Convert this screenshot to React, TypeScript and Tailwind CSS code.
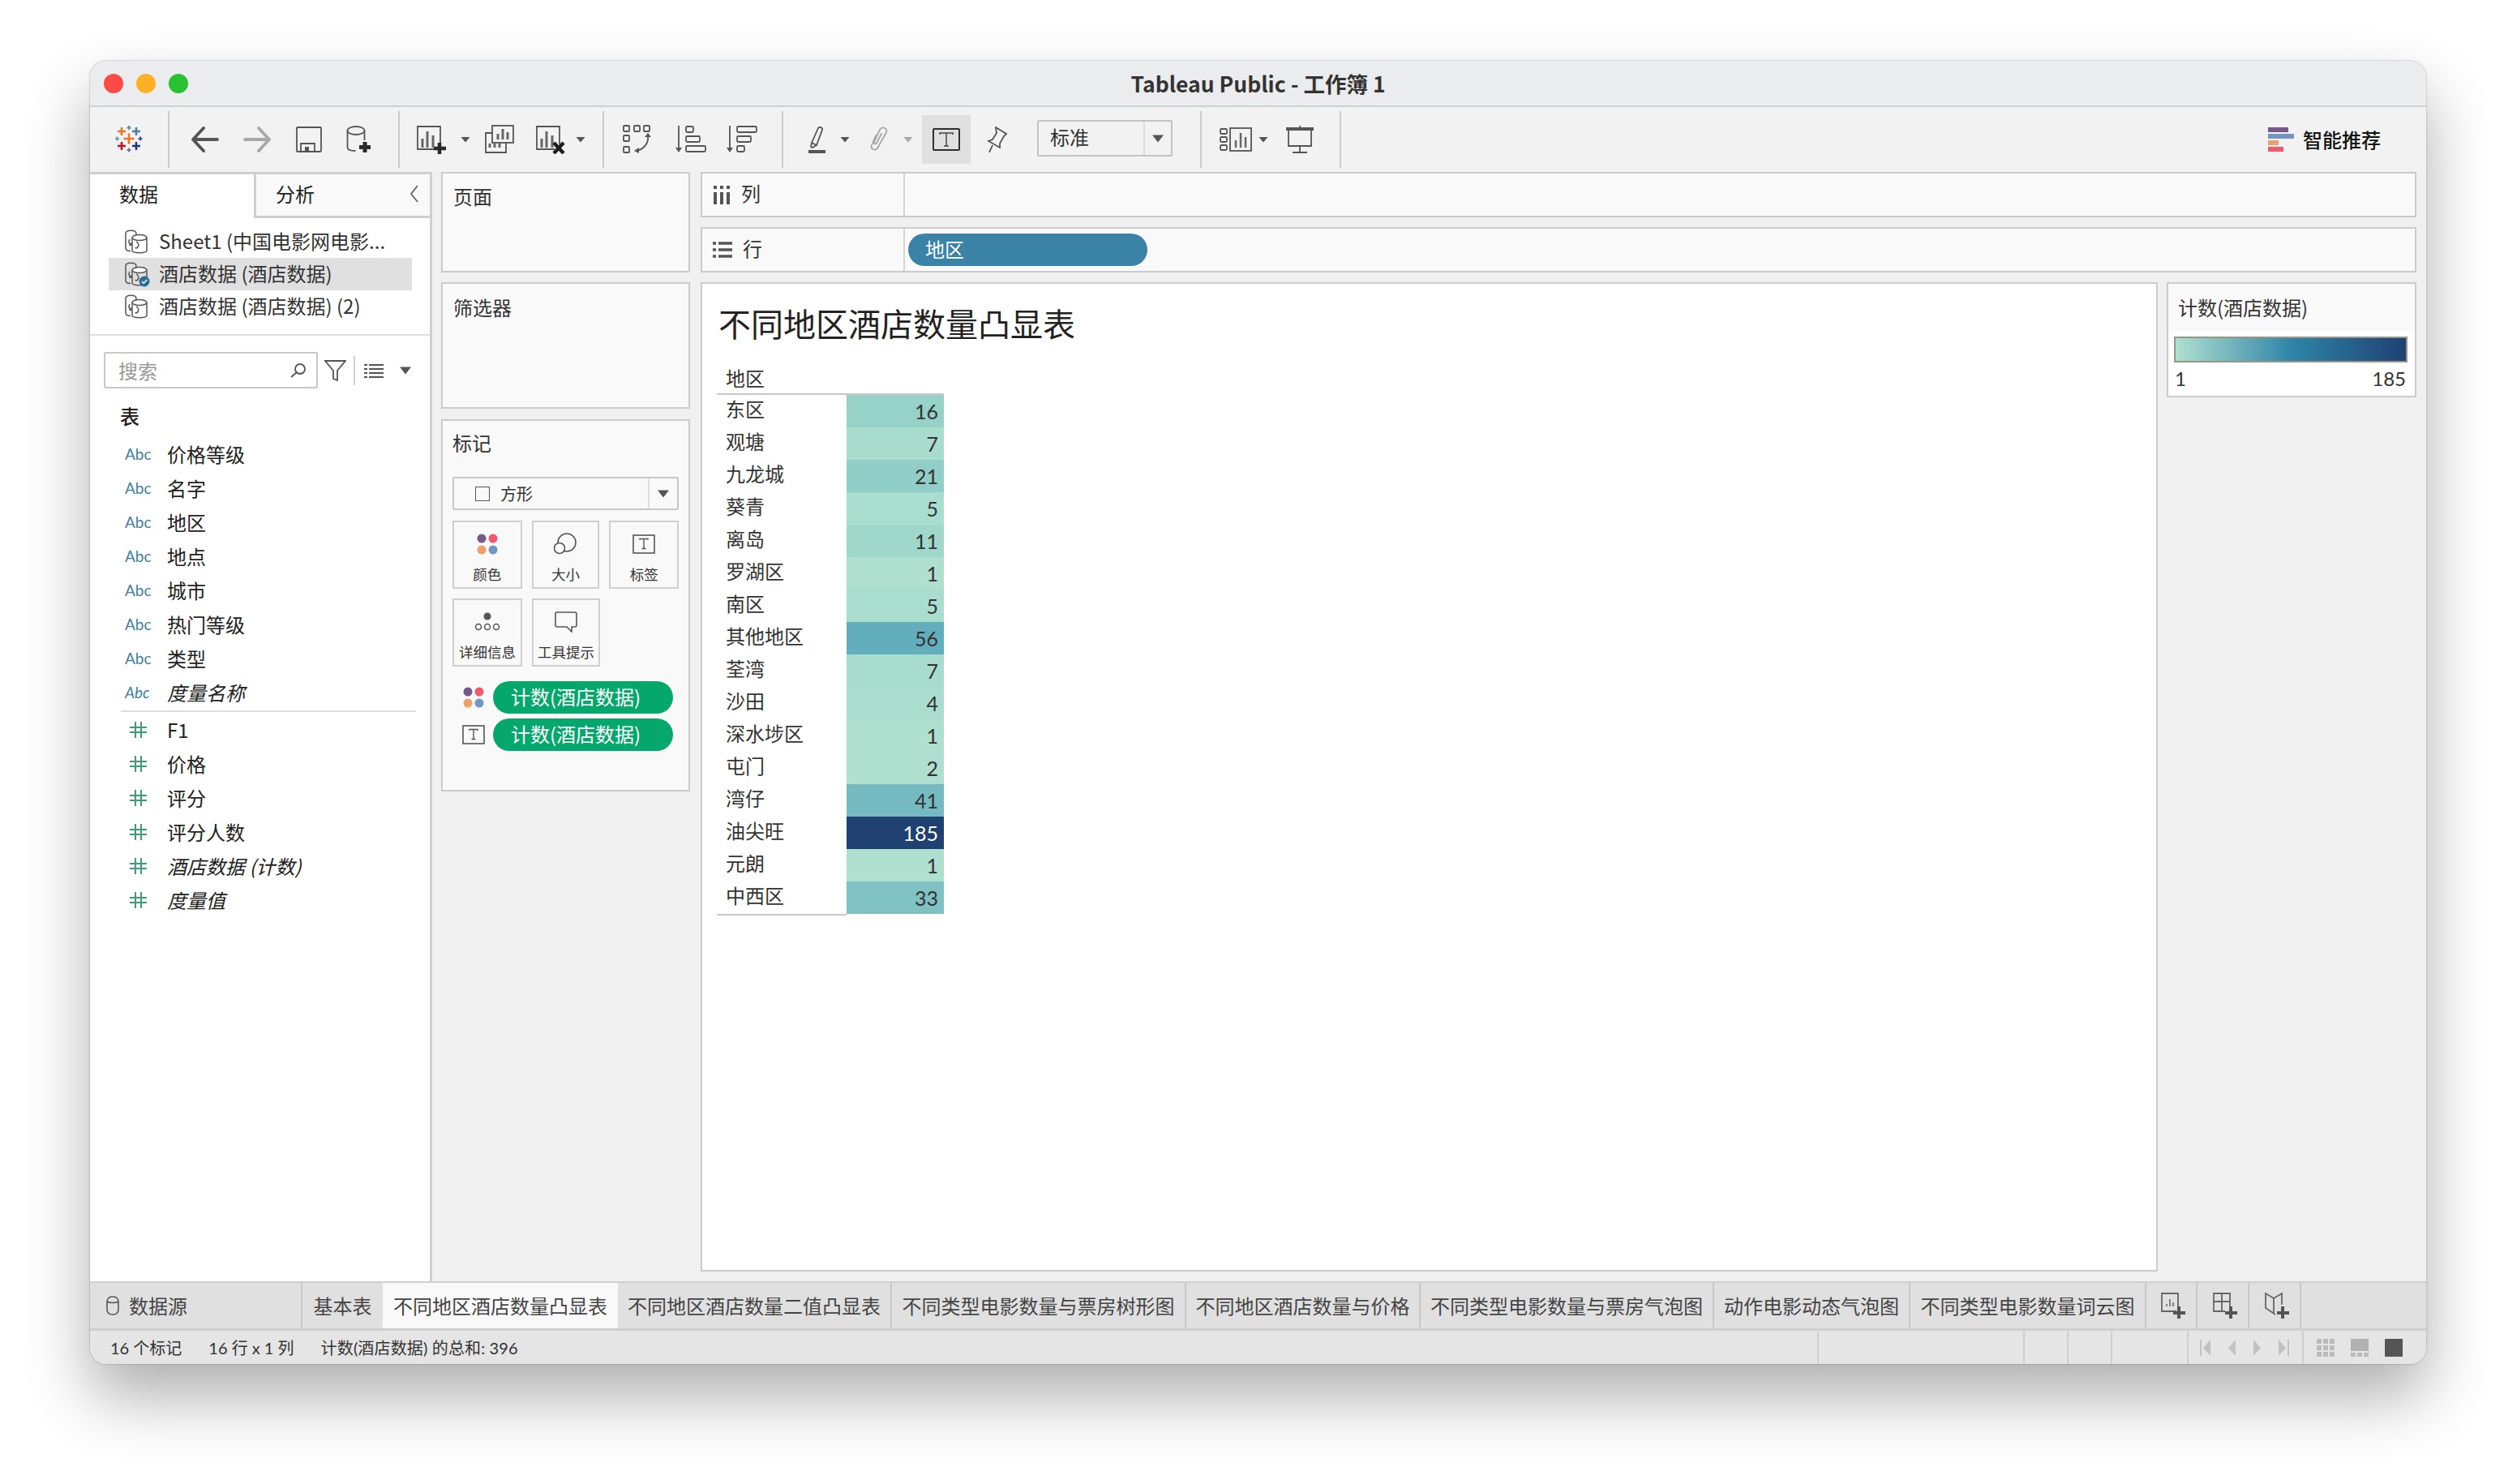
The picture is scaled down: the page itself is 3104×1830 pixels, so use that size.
import type { ReactNode } from 'react';

const TABLE_ROWS: [string, number, string][] = [
  ['东区', 16, '#97d2c9'],
  ['观塘', 7, '#a8dccd'],
  ['九龙城', 21, '#92cec8'],
  ['葵青', 5, '#a9ddce'],
  ['离岛', 11, '#9fd7cb'],
  ['罗湖区', 1, '#afe0cf'],
  ['南区', 5, '#a9ddce'],
  ['其他地区', 56, '#63aebd'],
  ['荃湾', 7, '#a8dccd'],
  ['沙田', 4, '#aaddce'],
  ['深水埗区', 1, '#afe0cf'],
  ['屯门', 2, '#aedfcf'],
  ['湾仔', 41, '#74bac0'],
  ['油尖旺', 185, '#1f4172'],
  ['元朗', 1, '#afe0cf'],
  ['中西区', 33, '#80c2c4'],
];

const DIM_FIELDS = ['价格等级', '名字', '地区', '地点', '城市', '热门等级', '类型'];
const MEASURE_FIELDS = ['F1', '价格', '评分', '评分人数'];

const TABS: [string, string][] = [
  ['不同地区酒店数量二值凸显表', 'w-[338px]'],
  ['不同类型电影数量与票房树形图', 'w-[363px]'],
  ['不同地区酒店数量与价格', 'w-[289px]'],
  ['不同类型电影数量与票房气泡图', 'w-[362px]'],
  ['动作电影动态气泡图', 'w-[242px]'],
  ['不同类型电影数量词云图', 'w-[291px]'],
];

function Caret({ className = '', color = '#555', big = false }: { className?: string; color?: string; big?: boolean }) {
  return (
    <svg width="16" height="10" viewBox="0 0 16 10" className={className}>
      <path d={big ? 'M1 0.500h14L8 9.500z' : 'M2.500 2h11L8 8.500z'} fill={color} />
    </svg>
  );
}

function Sep({ className = '' }: { className?: string }) {
  return <div className={`h-[70px] w-[2px] shrink-0 self-center bg-[#cbcbcb] ${className}`} />;
}

function TableauLogo() {
  const plus = (x: number, y: number, r: number, c: string, w = 2.6) => (
    <path d={`M${x - r} ${y}H${x + r}M${x} ${y - r}V${y + r}`} stroke={c} strokeWidth={w} fill="none" />
  );
  return (
    <svg width="34" height="34" viewBox="0 0 34 34">
      {plus(17, 16, 6.5, '#e8762b', 2.6)}
      {plus(8, 7, 5, '#e8762b')}
      {plus(26, 7, 5, '#4e7f9a')}
      {plus(8, 25, 5, '#c0142f')}
      {plus(26, 25, 5, '#1e3a78')}
      {plus(17, 2.5, 2.5, '#5e8fa6', 2)}
      {plus(17, 30, 2.5, '#6e7ba6', 2)}
      {plus(2.5, 16, 2.5, '#6e9fa8', 2)}
      {plus(31, 16, 2.5, '#45558f', 2)}
    </svg>
  );
}

function DbIcon({ check = false }: { check?: boolean }) {
  return (
    <svg width="34" height="32" viewBox="0 0 34 32" fill="none" stroke="#555" strokeWidth="1.5">
      <path d="M3 6c0-5 13-5 13 0v2" />
      <path d="M3 6v18c0 2.5 3 3.5 6 3.5" />
      <ellipse cx="20" cy="11" rx="9" ry="3.6" fill="#fff" />
      <path d="M11 11v16c0 3.5 18 3.5 18 0V11" />
      <path d="M8 13c-2 3-1 6 2 7l-1-2.5M10 20l-2.5.5" />
      <path d="M16 16c3 1 4 5 1 8M17 24l1.5-2.5M17 24l-2.5-.5" />
      {check && (
        <g stroke="none">
          <circle cx="26" cy="25" r="6.5" fill="#2a6e9a" />
          <path d="M23 25l2.2 2.2 4-4.2" stroke="#fff" strokeWidth="1.5" />
        </g>
      )}
    </svg>
  );
}

function AbcIcon() {
  return <span className="w-[57px] pl-[5px] font-['Lato',sans-serif] text-[19px] text-[#3f7f9e]">Abc</span>;
}

function HashIcon() {
  return (
    <span className="flex w-[57px] pl-[11px]">
      <svg width="21" height="20" viewBox="0 0 21 20" fill="none" stroke="#3e9c76" strokeWidth="2">
        <path d="M0 7h21M0 13h21M7 0v20M14 0v20" />
      </svg>
    </span>
  );
}

function FieldRow({ icon, children, italic = false }: { icon: ReactNode; children: ReactNode; italic?: boolean }) {
  return (
    <div className={`flex h-[42px] items-center text-[#222] ${italic ? 'italic' : ''}`}>
      {icon}
      <span>{children}</span>
    </div>
  );
}

function ColorDots({ className = '' }: { className?: string }) {
  return (
    <svg width="26" height="26" viewBox="0 0 26 26" className={className}>
      <circle cx="6" cy="6" r="5.5" fill="#76598a" />
      <circle cx="20" cy="6" r="5.5" fill="#f1596e" />
      <circle cx="6" cy="20" r="5.5" fill="#ee9f6b" />
      <circle cx="20" cy="20" r="5.5" fill="#7296c4" />
    </svg>
  );
}

function LabelIcon() {
  return (
    <svg width="28" height="24" viewBox="0 0 28 24" fill="none">
      <rect x="1" y="1" width="26" height="22" stroke="#555" strokeWidth="1.6" />
      <path d="M9 7V5.5h10V7M14 5.5v12M11.5 17.5h5" stroke="#555" strokeWidth="1.4" />
    </svg>
  );
}

function MarkButton({ icon, label, width }: { icon: ReactNode; label: string; width: string }) {
  return (
    <div className={`flex h-[84px] flex-col items-center border-2 border-[#cfcfcf] ${width}`}>
      <div className="flex h-[52px] items-center justify-center pt-[2px]">{icon}</div>
      <span className="text-[17.5px] leading-[24px] whitespace-nowrap text-[#333]">{label}</span>
    </div>
  );
}

function ToolIcon({ children, className = '' }: { children: ReactNode; className?: string }) {
  return <div className={`flex shrink-0 items-center justify-center ${className}`}>{children}</div>;
}

function Toolbar() {
  const s = { fill: 'none', stroke: '#555', strokeWidth: 1.8 };
  return (
    <div className="flex h-[80px] shrink-0 items-center bg-[#f2f2f2]">
      <ToolIcon className="w-[96px]">
        <TableauLogo />
      </ToolIcon>
      <Sep />
      <div className="flex w-[282px] items-center pl-[26px]">
        <ToolIcon className="w-[36px]">
          <svg width="34" height="32" viewBox="0 0 34 32" fill="none" stroke="#555" strokeWidth="3.8" strokeLinecap="round" strokeLinejoin="round">
            <path d="M32 16H3M15 2L2 16l13 14" />
          </svg>
        </ToolIcon>
        <ToolIcon className="ml-[28px] w-[36px]">
          <svg width="34" height="32" viewBox="0 0 34 32" fill="none" stroke="#a8a8a8" strokeWidth="3.8" strokeLinecap="round" strokeLinejoin="round">
            <path d="M2 16h29M19 2l13 14-13 14" />
          </svg>
        </ToolIcon>
        <ToolIcon className="ml-[28px] w-[36px]">
          <svg width="34" height="34" viewBox="0 0 34 34" {...s}>
            <rect x="2" y="2" width="30" height="30" rx="1" />
            <path d="M7 32V22h17v10" />
            <rect x="12" y="26" width="5" height="6" fill="#555" stroke="none" />
          </svg>
        </ToolIcon>
        <ToolIcon className="ml-[27px] w-[36px]">
          <svg width="34" height="36" viewBox="0 0 34 36" {...s}>
            <ellipse cx="12" cy="7" rx="10.5" ry="5" />
            <path d="M1.5 7v21c0 2.5 4 4 10 4M22.500 7v12" />
            <path d="M23 21v13M16 27.500h14" stroke="#2a2a2a" strokeWidth="5" />
          </svg>
        </ToolIcon>
      </div>
      <Sep />
      <div className="flex w-[250px] items-center pl-[20px]">
        <ToolIcon className="w-[38px]">
          <svg width="38" height="36" viewBox="0 0 38 36" {...s}>
            <path d="M27 30H2V2h28v26" />
            <path d="M8 28V17M14 28V8M21 28V13" strokeWidth="3" stroke="#666" />
            <path d="M29 22v14M22 29h15" stroke="#2a2a2a" strokeWidth="4.5" />
          </svg>
        </ToolIcon>
        <Caret className="ml-[15px]" />
        <ToolIcon className="ml-[15px] w-[38px]">
          <svg width="38" height="36" viewBox="0 0 38 36" {...s}>
            <rect x="10" y="1" width="26" height="21" />
            <path d="M17 18V11M23 18V5M29 18V9" strokeWidth="3" stroke="#666" />
            <path d="M10 10H2v24h25v-12" />
            <path d="M7 28v-5M13 28v-5M19 28v-5" strokeWidth="3" stroke="#666" />
          </svg>
        </ToolIcon>
        <ToolIcon className="ml-[25px] w-[38px]">
          <svg width="38" height="36" viewBox="0 0 38 36" {...s}>
            <path d="M24 30H2V2h28v22" />
            <path d="M8 28V17M14 28V8M21 28V13" strokeWidth="3" stroke="#666" />
            <path d="M23 22l12 13M35 22L23 35" stroke="#1f1f1f" strokeWidth="4.500" />
          </svg>
        </ToolIcon>
        <Caret className="ml-[10px]" />
      </div>
      <Sep />
      <div className="flex w-[219px] items-center pl-[23px]">
        <ToolIcon className="w-[38px]">
          <svg width="38" height="36" viewBox="0 0 38 36" {...s}>
            <rect x="1" y="1" width="7" height="7" rx="1" />
            <rect x="14" y="1" width="7" height="7" rx="1" />
            <rect x="26" y="1" width="7" height="7" rx="1" />
            <rect x="1" y="13" width="7" height="7" rx="1" />
            <rect x="1" y="27" width="7" height="7" rx="1" />
            <path d="M31 14c1 8-4 15-13 18" />
            <path d="M27 15l4-5 4 5zM20 28l-6 4 6 3z" fill="#555" stroke="none" />
          </svg>
        </ToolIcon>
        <ToolIcon className="ml-[27px] w-[38px]">
          <svg width="38" height="36" viewBox="0 0 38 36" {...s}>
            <path d="M4 1v30" />
            <path d="M0 28h8l-4 6z" fill="#555" stroke="none" />
            <rect x="13" y="2" width="9" height="7" rx="1.500" />
            <rect x="13" y="14" width="17" height="7" rx="1.500" />
            <rect x="13" y="26" width="24" height="7" rx="1.500" />
          </svg>
        </ToolIcon>
        <ToolIcon className="ml-[25px] w-[38px]">
          <svg width="38" height="36" viewBox="0 0 38 36" {...s}>
            <path d="M4 1v30" />
            <path d="M0 28h8l-4 6z" fill="#555" stroke="none" />
            <rect x="13" y="2" width="24" height="7" rx="1.500" />
            <rect x="13" y="14" width="17" height="7" rx="1.500" />
            <rect x="13" y="26" width="9" height="7" rx="1.500" />
          </svg>
        </ToolIcon>
      </div>
      <Sep />
      <div className="flex w-[514px] items-center pl-[27px]">
        <ToolIcon className="w-[30px]">
          <svg width="24" height="34" viewBox="0 0 24 34" {...s}>
            <path d="M5 21L13 3c1-2.500 6-.5 5 2L11 24z" />
            <path d="M5 21l-1 5 2 1 5-3" />
            <rect x="1" y="30" width="21" height="4" fill="#555" stroke="none" />
          </svg>
        </ToolIcon>
        <Caret className="ml-[11px]" />
        <ToolIcon className="ml-[19px] w-[30px]">
          <svg width="24" height="32" viewBox="0 0 24 32" fill="none" stroke="#a8a8a8" strokeWidth="1.800" strokeLinecap="round">
            <path d="M8 11L3 23c-2 5 5 8 7.500 3L21 7c2-5-5-8-8-3L6 19c-1 2 2 3.500 3 1.500L15 9" />
          </svg>
        </ToolIcon>
        <Caret className="ml-[13px]" color="#a8a8a8" />
        <div className="ml-[9px] flex h-[60px] w-[60px] items-center justify-center bg-[#e0e0e0]">
          <svg width="34" height="28" viewBox="0 0 34 28" fill="none">
            <rect x="1" y="1" width="32" height="26" rx="1" stroke="#2f2f2f" strokeWidth="2" />
            <path d="M9 8V6h16v2M17 6v16M14 22h6" stroke="#444" strokeWidth="1.500" />
          </svg>
        </div>
        <ToolIcon className="ml-[13px] w-[38px]">
          <svg width="28" height="32" viewBox="0 0 28 32" {...s}>
            <path d="M13 1l13 8-3 3-5 9 0 5L4 18l5-2 5-8z" />
            <path d="M9 23L5 32" />
          </svg>
        </ToolIcon>
        <div className="mt-[-3px] ml-[31px] flex h-[45px] w-[167px] rounded-[2px] border-2 border-[#c3c3c3] text-[24px] text-[#333]">
          <span className="flex-1 pl-[14px] leading-[38px]">标准</span>
          <span className="flex w-[34px] items-center justify-center border-l-2 border-[#dcdcdc]">
            <Caret big />
          </span>
        </div>
      </div>
      <Sep />
      <div className="flex w-[170px] items-center pl-[22px]">
        <ToolIcon className="w-[40px]">
          <svg width="40" height="30" viewBox="0 0 40 30" {...s}>
            <rect x="1" y="2" width="8" height="6" rx="1.500" />
            <rect x="1" y="12" width="8" height="6" rx="1.500" />
            <rect x="1" y="22" width="8" height="6" rx="1.500" />
            <rect x="13" y="1" width="26" height="28" />
            <path d="M20 25V16M26 25V7M32 25V12" strokeWidth="2.500" stroke="#666" />
          </svg>
        </ToolIcon>
        <Caret className="ml-[6px]" />
        <ToolIcon className="ml-[19px] w-[36px]">
          <svg width="36" height="34" viewBox="0 0 36 34" {...s}>
            <path d="M1 4h34" strokeWidth="4" />
            <path d="M18 0v3" />
            <path d="M4 5v20h28V5M18 25v8M9 33h18" />
          </svg>
        </ToolIcon>
      </div>
      <Sep />
      <div className="flex flex-1 items-center justify-end pr-[56px]">
        <div className="mr-[11px] flex w-[32px] flex-col gap-[2px]">
          <span className="h-[6px] w-[25px] bg-[#76598a]" />
          <span className="h-[6px] w-[32px] bg-[#7296c4]" />
          <span className="h-[6px] w-[13px] bg-[#ee9f6b]" />
          <span className="h-[6px] w-[19px] bg-[#f1596e]" />
        </div>
        <span className="text-[24px] font-medium text-[#111]">智能推荐</span>
      </div>
    </div>
  );
}

function LeftPanel() {
  return (
    <aside className="flex w-[422px] shrink-0 flex-col border-t-[3px] border-r-[3px] border-[#cfcfcf] bg-white text-[24px]">
      <div className="flex h-[54px] shrink-0">
        <div className="flex w-[202px] items-center pb-[6px] pl-[36px] text-[#222]">数据</div>
        <div className="flex flex-1 items-center justify-between border-b-[3px] border-l-[3px] border-[#cfcfcf] bg-[#f9f9f9] pr-[13px] pb-[3px] pl-[24px] text-[#222]">
          <span>分析</span>
          <svg width="12" height="24" viewBox="0 0 12 24" fill="none" stroke="#666" strokeWidth="1.800">
            <path d="M10 2L2 12l8 10" />
          </svg>
        </div>
      </div>
      <div className="flex flex-col pt-[9px] pl-[23px] text-[#333]">
        {['Sheet1 (中国电影网电影...', '酒店数据 (酒店数据)', '酒店数据 (酒店数据) (2)'].map((name, i) => (
          <div key={name} className={`flex h-[40px] w-[374px] items-center pl-[18px] ${i === 1 ? 'bg-[#e0e0e0]' : ''}`}>
            <DbIcon check={i === 1} />
            <span className="ml-[10px] pb-[3px] whitespace-nowrap">{name}</span>
          </div>
        ))}
      </div>
      <div className="mt-[14px] border-t-2 border-[#dedede] pt-[20px] pl-[17px]">
        <div className="flex h-[45px] items-center">
          <div className="flex h-[45px] w-[264px] items-center justify-between rounded-[2px] border-2 border-[#c8c8c8] pr-[12px] pl-[16px] text-[#999]">
            <span>搜索</span>
            <svg width="20" height="20" viewBox="0 0 20 20" fill="none" stroke="#555" strokeWidth="1.800">
              <circle cx="12" cy="8" r="6" />
              <path d="M7.500 12.500L1 18" />
            </svg>
          </div>
          <svg width="27" height="28" viewBox="0 0 27 28" fill="none" stroke="#555" strokeWidth="1.800" className="ml-[8px]">
            <path d="M1 2h25L16 14v12l-5-2V14z" />
          </svg>
          <div className="ml-[9px] h-[36px] w-[2px] bg-[#d0d0d0]" />
          <svg width="25" height="18" viewBox="0 0 25 18" stroke="#555" strokeWidth="2" className="ml-[11px]">
            <path d="M0 2h4M6 2h18M0 7h4M6 7h18M0 12h4M6 12h18M0 17h4M6 17h18" />
          </svg>
          <Caret className="ml-[18px]" big />
        </div>
      </div>
      <div className="flex flex-col pl-[38px] text-[#222]">
        <div className="mt-[13px] flex h-[42px] items-center font-medium">
          <span className="ml-[-1px]">表</span>
        </div>
        <div className="mt-[5px]">
          {DIM_FIELDS.map((f) => (
            <FieldRow key={f} icon={<AbcIcon />}>
              {f}
            </FieldRow>
          ))}
          <FieldRow icon={<AbcIcon />} italic>
            度量名称
          </FieldRow>
        </div>
        <div className="my-[1px] mr-[17px] h-[2px] bg-[#dedede]" />
        {MEASURE_FIELDS.map((f) => (
          <FieldRow key={f} icon={<HashIcon />}>
            {f}
          </FieldRow>
        ))}
        <FieldRow icon={<HashIcon />} italic>
          酒店数据 (计数)
        </FieldRow>
        <FieldRow icon={<HashIcon />} italic>
          度量值
        </FieldRow>
      </div>
    </aside>
  );
}

function ShelfColumn() {
  return (
    <div className="ml-[11px] flex w-[307px] shrink-0 flex-col text-[24px] text-[#333]">
      <div className="h-[124px] border-2 border-[#cbcbcb] bg-[#f9f9f9] pt-[10px] pl-[13px]">页面</div>
      <div className="mt-[12px] h-[156px] border-2 border-[#cbcbcb] bg-[#f9f9f9] pt-[11px] pl-[13px]">筛选器</div>
      <div className="mt-[13px] h-[459px] border-2 border-[#cbcbcb] bg-[#f9f9f9] pt-[9px] pr-[12px] pl-[12px]">
        <div className="leading-[36px]">标记</div>
        <div className="mt-[24px] flex h-[41px] rounded-[2px] border-2 border-[#c8c8c8]">
          <div className="flex flex-1 items-center pl-[26px]">
            <span className="h-[18px] w-[18px] border-[1.5px] border-[#555]" />
            <span className="ml-[13px] text-[20px]">方形</span>
          </div>
          <div className="flex w-[36px] items-center justify-center border-l-2 border-[#dcdcdc]">
            <Caret big />
          </div>
        </div>
        <div className="mt-[13px] flex gap-[12px]">
          <MarkButton width="w-[86px]" label="颜色" icon={<ColorDots />} />
          <MarkButton
            width="w-[84px]"
            label="大小"
            icon={
              <svg width="30" height="28" viewBox="0 0 30 28" fill="none" stroke="#555" strokeWidth="1.600">
                <circle cx="17" cy="12" r="11" />
                <circle cx="8" cy="19" r="6.500" fill="#f9f9f9" />
              </svg>
            }
          />
          <MarkButton width="w-[86px]" label="标签" icon={<LabelIcon />} />
        </div>
        <div className="mt-[12px] flex gap-[12px]">
          <MarkButton
            width="w-[86px]"
            label="详细信息"
            icon={
              <svg width="32" height="24" viewBox="0 0 32 24" fill="none" stroke="#555" strokeWidth="1.500">
                <circle cx="16" cy="5" r="4.500" fill="#555" stroke="none" />
                <circle cx="5" cy="18" r="3.500" />
                <circle cx="16" cy="18" r="3.500" />
                <circle cx="27" cy="18" r="3.500" />
              </svg>
            }
          />
          <MarkButton
            width="w-[84px]"
            label="工具提示"
            icon={
              <svg width="28" height="26" viewBox="0 0 28 26" fill="none" stroke="#555" strokeWidth="1.600">
                <path d="M3 1h22a2 2 0 0 1 2 2v14a2 2 0 0 1-2 2h-4v6l-6-6H3a2 2 0 0 1-2-2V3a2 2 0 0 1 2-2z" />
              </svg>
            }
          />
        </div>
        <div className="mt-[18px] flex items-center">
          <div className="flex w-[50px] justify-center pl-[2px]">
            <ColorDots />
          </div>
          <div className="flex h-[40px] w-[222px] items-center rounded-full bg-[#06a76d] pb-[2px] pl-[22px] whitespace-nowrap text-white">
            计数(酒店数据)
          </div>
        </div>
        <div className="mt-[6px] flex items-center">
          <div className="flex w-[50px] justify-center pl-[2px]">
            <LabelIcon />
          </div>
          <div className="flex h-[40px] w-[222px] items-center rounded-full bg-[#06a76d] pb-[2px] pl-[22px] whitespace-nowrap text-white">
            计数(酒店数据)
          </div>
        </div>
      </div>
    </div>
  );
}

function Shelf({ icon, label, children }: { icon: ReactNode; label: string; children?: ReactNode }) {
  return (
    <div className="flex h-[56px] border-2 border-[#cbcbcb] bg-[#f9f9f9] text-[24px] text-[#333]">
      <div className="flex w-[250px] items-center border-r-2 border-[#d4d4d4] pl-[13px]">
        {icon}
        <span className="ml-[13px] pb-[4px]">{label}</span>
      </div>
      <div className="flex flex-1 items-center pl-[4px]">{children}</div>
    </div>
  );
}

function Canvas() {
  return (
    <section className="flex h-[1220px] flex-1 flex-col border-2 border-[#cbcbcb] bg-white">
      <h1 className="mt-[24px] ml-[20px] text-[40px] leading-[48px] font-normal text-[#222]">不同地区酒店数量凸显表</h1>
      <div className="mt-[25px] ml-[18px] w-[280px]">
        <div className="h-[40px] w-[280px] border-b-2 border-[#c8c8c8] pl-[11px] text-[24px] leading-[38px] text-[#333]">
          地区
        </div>
        {TABLE_ROWS.map(([name, count, bg]) => (
          <div key={name} className="flex h-[40px] items-center">
            <span className="w-[160px] pb-[6px] pl-[11px] text-[24px] leading-[34px] text-[#333]">{name}</span>
            <span
              className={`h-[40px] w-[120px] pr-[7px] text-right font-['Lato',sans-serif] text-[25px] leading-[40px] ${count === 185 ? 'text-white' : 'text-[#333]'}`}
              style={{ backgroundColor: bg }}
            >
              {count}
            </span>
          </div>
        ))}
        <div className="h-[2px] w-[160px] bg-[#c8c8c8]" />
      </div>
    </section>
  );
}

function Legend() {
  return (
    <aside className="h-[142px] w-[308px] shrink-0 border-2 border-[#cbcbcb] bg-white text-[24px] text-[#333]">
      <div className="h-[58px] bg-[#f9f9f9] pl-[12px] leading-[58px]">计数(酒店数据)</div>
      <div className="mt-[7px] mr-[9px] ml-[7px] h-[32px] border-2 border-[#9a9682] bg-gradient-to-r from-[#afe0cf] via-[#2e86a8] to-[#1f4172]" />
      <div className="mt-[2px] mr-[11px] ml-[8px] flex justify-between font-['Lato',sans-serif] leading-[36px]">
        <span>1</span>
        <span>185</span>
      </div>
    </aside>
  );
}

function Workspace() {
  return (
    <div className="flex min-w-0 flex-1 flex-col pl-[13px]">
      <div className="flex flex-col gap-[12px]">
        <Shelf
          label="列"
          icon={
            <svg width="22" height="24" viewBox="0 0 22 24" stroke="#555" strokeWidth="4">
              <path d="M3 9v15M11 9v15M19 9v15M3 1v4M11 1v4M19 1v4" />
            </svg>
          }
        />
        <Shelf
          label="行"
          icon={
            <svg width="24" height="22" viewBox="0 0 24 22" stroke="#555" strokeWidth="3.500">
              <path d="M0 3h4M7 3h17M0 11h4M7 11h17M0 19h4M7 19h17" />
            </svg>
          }
        >
          <div className="flex h-[40px] w-[295px] items-center rounded-full bg-[#3a83a6] pb-[3px] pl-[21px] text-white">地区</div>
        </Shelf>
      </div>
      <div className="mt-[12px] flex gap-[11px]">
        <Canvas />
        <Legend />
      </div>
    </div>
  );
}

function TabBar() {
  return (
    <div className="flex h-[61px] shrink-0 border-t-2 border-b-[3px] border-[#cfcfcf] bg-[#e0e0e0] text-[24px] text-[#444]">
      <div className="flex w-[262px] items-center border-r-2 border-[#c8c8c8] pl-[20px]">
        <svg width="16" height="24" viewBox="0 0 16 24" fill="none" stroke="#555" strokeWidth="1.600">
          <rect x="1" y="1" width="14" height="22" rx="6" />
          <path d="M1 7c3 2 11 2 14 0" />
        </svg>
        <span className="ml-[12px]">数据源</span>
      </div>
      <div className="flex w-[99px] items-center justify-center">基本表</div>
      <div className="flex w-[290px] items-center justify-center bg-[#f9f9f9]">不同地区酒店数量凸显表</div>
      {TABS.map(([name, w]) => (
        <div key={name} className={`flex items-center justify-center border-r-2 border-[#c8c8c8] whitespace-nowrap ${w}`}>
          {name}
        </div>
      ))}
      <div className="flex w-[63px] items-center justify-center border-r-2 border-[#c8c8c8] pl-[4px]">
        <svg width="32" height="34" viewBox="0 0 32 34" fill="none" stroke="#666" strokeWidth="1.800">
          <path d="M20 24H2V2h20v16" />
          <path d="M8 18v-3M12 18V9M16 18v-5" strokeWidth="1.500" />
          <path d="M23 18v15M16 26h15" stroke="#555" strokeWidth="4" />
        </svg>
      </div>
      <div className="flex w-[64px] items-center justify-center border-r-2 border-[#c8c8c8] pl-[6px]">
        <svg width="32" height="34" viewBox="0 0 32 34" fill="none" stroke="#666" strokeWidth="1.800">
          <path d="M16 24H2V2h20v16M2 12h20M12 2v22" />
          <path d="M23 18v15M16 26h15" stroke="#555" strokeWidth="4" />
        </svg>
      </div>
      <div className="flex w-[64px] items-center justify-center border-r-2 border-[#c8c8c8] pl-[6px]">
        <svg width="32" height="34" viewBox="0 0 32 34" fill="none" stroke="#666" strokeWidth="1.800">
          <path d="M14 28L2 20V2l10 6 10-6v14M12 8v18" />
          <path d="M23 18v15M16 26h15" stroke="#555" strokeWidth="4" />
        </svg>
      </div>
    </div>
  );
}

function StatusBar() {
  const gridDot = 'h-[6px] w-[6px] bg-[#bbb]';
  return (
    <div className="flex min-h-0 flex-1 items-stretch bg-[#e5e5e5] font-['Lato','Noto_Sans_CJK_SC',sans-serif] text-[20px] text-[#333]">
      <div className="flex w-[2130px] items-center pl-[25px]">
        <span>16 个标记</span>
        <span className="ml-[33px]">16 行 x 1 列</span>
        <span className="ml-[33px] tracking-[0.15px]">计数(酒店数据) 的总和: 396</span>
      </div>
      <div className="w-[254px] border-l-2 border-[#cfcfcf]" />
      <div className="w-[54px] border-l-2 border-[#cfcfcf]" />
      <div className="w-[54px] border-l-2 border-[#cfcfcf]" />
      <div className="w-[94px] border-l-2 border-[#cfcfcf]" />
      <div className="flex w-[142px] items-center justify-between border-l-2 border-[#cfcfcf] pr-[16px] pl-[14px]">
        <svg width="14" height="20" viewBox="0 0 14 20" fill="#c2c2c2">
          <path d="M0 0h2v20H0zM13 0v20L4 10z" />
        </svg>
        <svg width="10" height="20" viewBox="0 0 10 20" fill="#c2c2c2">
          <path d="M9 0v20L0 10z" />
        </svg>
        <svg width="10" height="20" viewBox="0 0 10 20" fill="#c2c2c2">
          <path d="M1 0v20l9-10z" />
        </svg>
        <svg width="14" height="20" viewBox="0 0 14 20" fill="#c2c2c2">
          <path d="M12 0h2v20h-2zM1 0v20l9-10z" />
        </svg>
      </div>
      <div className="flex flex-1 items-center border-l-2 border-[#cfcfcf] pl-[16px]">
        <div className="grid grid-cols-3 gap-[2px]">
          {Array.from({ length: 9 }, (_, i) => (
            <span key={i} className={gridDot} />
          ))}
        </div>
        <div className="ml-[20px] flex w-[22px] flex-col gap-[2px]">
          <span className="h-[15px] w-[22px] bg-[#b2b2b2]" />
          <span className="grid h-[5px] grid-cols-3 gap-[2px]">
            <span className="bg-[#bbb]" />
            <span className="bg-[#bbb]" />
            <span className="bg-[#bbb]" />
          </span>
        </div>
        <div className="ml-[20px] h-[22px] w-[22px] bg-[#555]" />
      </div>
    </div>
  );
}

export default function App() {
  return (
    <div className="h-[1830px] w-[3104px] bg-white px-[111px] pt-[75px] font-['Noto_Sans_CJK_SC','Noto_Sans',sans-serif]">
      <div className="flex h-[1607px] w-[2881px] flex-col overflow-hidden rounded-[20px] bg-[#f0f0f0] shadow-[0_0_2px_rgba(0,0,0,0.4),0_40px_80px_rgba(0,0,0,0.32)]">
        <header className="relative flex h-[57px] shrink-0 items-center justify-center border-b-2 border-[#d0d0d0] bg-[#ebecee]">
          <div className="absolute left-[17px] flex gap-[16px]">
            <span className="h-[24px] w-[24px] rounded-full bg-[#ff4b47]" />
            <span className="h-[24px] w-[24px] rounded-full bg-[#ffb025]" />
            <span className="h-[24px] w-[24px] rounded-full bg-[#28c131]" />
          </div>
          <span className="text-[26.500px] font-bold text-[#333]">Tableau Public - 工作簿 1</span>
        </header>
        <Toolbar />
        <div className="flex h-[1368px] shrink-0">
          <LeftPanel />
          <ShelfColumn />
          <Workspace />
          <div className="w-[12px] shrink-0" />
        </div>
        <TabBar />
        <StatusBar />
      </div>
    </div>
  );
}
